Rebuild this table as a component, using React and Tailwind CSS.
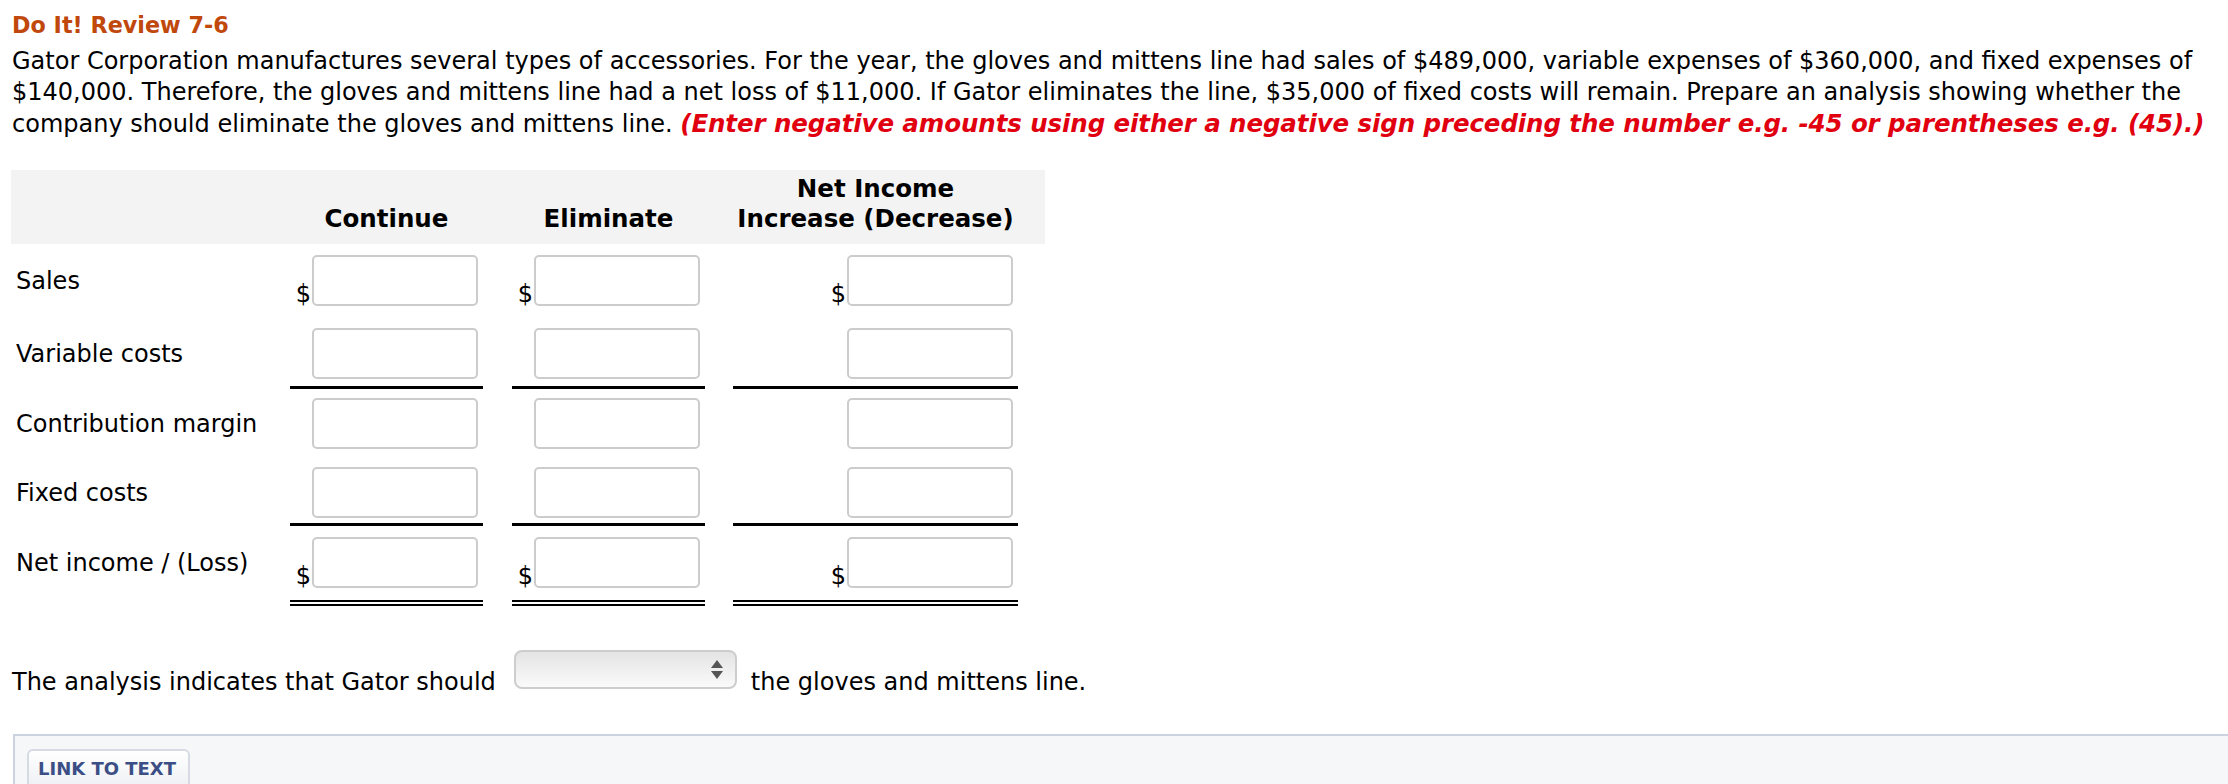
import React from "react";

const Field = () => (
  <div className="w-[166px] h-[51px] border-2 border-[#cccccc] rounded-[5px] bg-white shrink-0"></div>
);

const ValueCell = ({ width, dollar, rule, pt, pb }) => {
  let ruleClass = "";
  if (rule === "single") ruleClass = "border-b-[3px] border-black";
  if (rule === "double") ruleClass = "border-b-[6px] border-double border-black";

  return (
    <div
      className={`flex items-end justify-end gap-[1px] pr-[5px] ${width} ${pt} ${pb} ${ruleClass}`}
    >
      {dollar && <span className="leading-[20px] mb-[2px]">$</span>}
      <Field />
    </div>
  );
};

const Row = ({ label, dollar, rule, pt, pb }) => (
  <div className="flex">
    <div className={`w-[279px] pl-[5px] ${pt} ${pb}`}>
      <div className="h-[51px] flex items-center">{label}</div>
    </div>
    <ValueCell width="w-[193px]" dollar={dollar} rule={rule} pt={pt} pb={pb} />
    <div className="w-[29px]"></div>
    <ValueCell width="w-[193px]" dollar={dollar} rule={rule} pt={pt} pb={pb} />
    <div className="w-[28px]"></div>
    <ValueCell width="w-[285px]" dollar={dollar} rule={rule} pt={pt} pb={pb} />
  </div>
);

export default function App() {
  return (
    <div
      className="h-[784px] overflow-hidden bg-white text-black text-[24px] leading-[30px]"
      style={{ fontFamily: '"DejaVu Sans", Verdana, sans-serif' }}
    >
      <div className="pl-[12px] pr-[10px] pt-[10px]">
        <h2 className="text-[22.3px] font-bold text-[#c0480c]">Do It! Review 7-6</h2>
        <p className="mt-[6px] leading-[31px]">
          Gator Corporation manufactures several types of accessories. For the year, the gloves and
          mittens line had sales of $489,000, variable expenses of $360,000, and fixed expenses of
          <br />
          $140,000. Therefore, the gloves and mittens line had a net loss of $11,000. If Gator
          eliminates the line, $35,000 of fixed costs will remain. Prepare an analysis showing whether
          the
          <br />
          company should eliminate the gloves and mittens line.{" "}
          <span className="font-bold italic text-[24.5px] tracking-[-0.1px] text-[#e1000f]">
            (Enter negative amounts using either a negative sign preceding the number e.g. -45 or
            parentheses e.g. (45).)
          </span>
        </p>
      </div>

      <div className="ml-[11px] mt-[30px] w-[1034px]">
        <div className="flex items-end bg-[#f3f3f3] pt-[4px] pb-[10px] font-bold text-[24.5px]">
          <div className="w-[279px]"></div>
          <div className="w-[193px] text-center">Continue</div>
          <div className="w-[29px]"></div>
          <div className="w-[193px] text-center">Eliminate</div>
          <div className="w-[28px]"></div>
          <div className="w-[285px] text-center">
            Net Income
            <br />
            Increase (Decrease)
          </div>
        </div>

        <Row label="Sales" dollar pt="pt-[11px]" pb="pb-0" />
        <Row label="Variable costs" rule="single" pt="pt-[22px]" pb="pb-[7px]" />
        <Row label="Contribution margin" pt="pt-[9px]" pb="pb-0" />
        <Row label="Fixed costs" rule="single" pt="pt-[18px]" pb="pb-[5px]" />
        <Row label="Net income / (Loss)" dollar rule="double" pt="pt-[11px]" pb="pb-[12px]" />
      </div>

      <div className="flex items-end pl-[12px] mt-[44px]">
        <span className="leading-[24px] mb-[-5px]">The analysis indicates that Gator should</span>
        <div className="relative ml-[18px] w-[223px] h-[39px] rounded-[8px] border-2 border-[#cdcdcd] bg-linear-to-b from-[#e4e4e4] to-[#fafafa]">
          <div className="absolute right-[12px] top-[8px] flex flex-col items-center gap-[3px]">
            <div className="w-0 h-0 border-l-[6px] border-r-[6px] border-b-[8px] border-l-transparent border-r-transparent border-b-[#555555]"></div>
            <div className="w-0 h-0 border-l-[6px] border-r-[6px] border-t-[8px] border-l-transparent border-r-transparent border-t-[#555555]"></div>
          </div>
        </div>
        <span className="leading-[24px] mb-[-5px] ml-[14px]">the gloves and mittens line.</span>
      </div>

      <div className="ml-[13px] mt-[45px] h-[120px] border-t-2 border-l-2 border-[#cdd3de] bg-[#f6f7f9] pl-[12px] pt-[13px]">
        <button className="w-[163px] h-[44px] rounded-[6px] border-2 border-[#d6dae2] bg-linear-to-b from-white to-[#eceef2] text-left pl-[9px] pb-[4px] text-[18px] font-bold text-[#3b4e85] leading-[22px]">
          LINK TO TEXT
        </button>
      </div>
    </div>
  );
}
